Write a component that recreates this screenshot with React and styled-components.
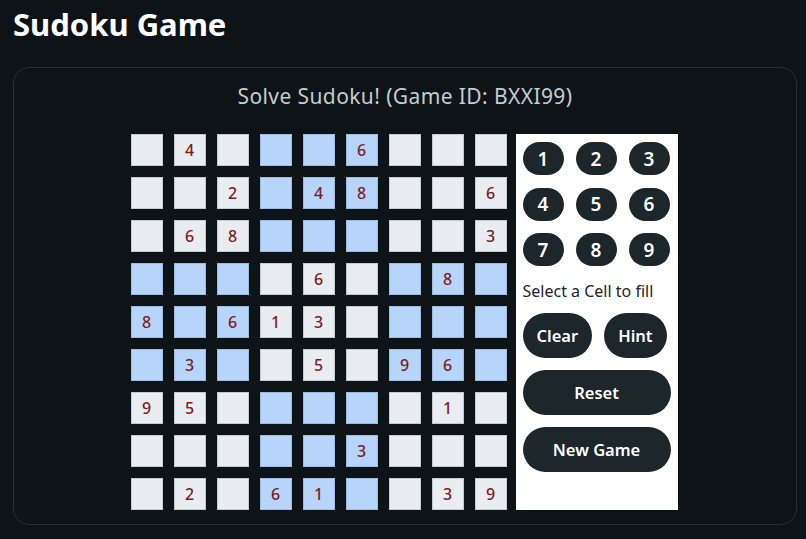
import React from 'react';
import styled, { createGlobalStyle } from 'styled-components';

const GlobalStyle = createGlobalStyle`
  body {
    margin: 0;
    background: #0d1317;
    font-family: 'Noto Sans', 'Open Sans', sans-serif;
  }
`;

const Title = styled.h1`
  margin: 0;
  padding: 0 13px;
  font-size: 31px;
  line-height: 48px;
  font-weight: 700;
  color: #ffffff;
`;

const Card = styled.section`
  margin: 19px 9px 0 13px;
  border: 1px solid #283036;
  border-radius: 16px;
  padding: 13px 0 14px;
`;

const Heading = styled.h2`
  margin: 0 0 23px;
  text-align: center;
  font-size: 21px;
  letter-spacing: 0.4px;
  line-height: 30px;
  font-weight: 400;
  color: #c3ccd3;
`;

const Game = styled.div`
  display: flex;
  justify-content: center;
  gap: 9px;
  padding-right: 2px;
`;

const Board = styled.div`
  display: grid;
  grid-template-columns: repeat(9, 32px);
  grid-auto-rows: 32px;
  gap: 11px;
`;

const Cell = styled.div`
  box-sizing: border-box;
  border: 1px solid ${p => (p.$blue ? '#9fbbe0' : '#c4c9ce')};
  background: ${p => (p.$blue ? '#b7d5fb' : '#e9edf1')};
  display: flex;
  align-items: center;
  justify-content: center;
  font-size: 16px;
  font-weight: 500;
  color: #7d1c22;
`;

const Panel = styled.div`
  width: 162px;
  box-sizing: border-box;
  background: #ffffff;
  padding: 8px 7px;
  display: flex;
  flex-direction: column;
`;

const Numbers = styled.div`
  display: grid;
  grid-template-columns: repeat(3, 41px);
  column-gap: 12px;
  row-gap: 12.5px;
`;

const Button = styled.button`
  border: none;
  background: #1c262b;
  color: #ffffff;
  font-family: inherit;
  font-weight: 600;
  border-radius: 999px;
  padding: 0 14px;
  height: 45px;
  font-size: 16.5px;
  cursor: pointer;
`;

const NumButton = styled(Button)`
  padding: 0;
  width: 41px;
  height: 33px;
  font-size: 19px;
`;

const Hint = styled.p`
  margin: 13px 0 0;
  font-size: 16px;
  line-height: 24px;
  color: #212529;
`;

const Row = styled.div`
  display: flex;
  gap: 12px;
  margin-top: 10px;
`;

const WideButton = styled(Button)`
  width: 100%;
  margin-top: 12px;
`;

const puzzle = [
  '.4...6...',
  '..2.48..6',
  '.68.....3',
  '....6..8.',
  '8.613....',
  '.3..5.96.',
  '95.....1.',
  '.....3...',
  '.2.61..39',
];

export default function App() {
  return (
    <>
      <GlobalStyle />
      <Title>Sudoku Game</Title>
      <Card>
        <Heading>Solve Sudoku! (Game ID: BXXI99)</Heading>
        <Game>
          <Board>
            {puzzle.map((line, r) =>
              line.split('').map((ch, c) => (
                <Cell
                  key={`${r}-${c}`}
                  $blue={(Math.floor(r / 3) + Math.floor(c / 3)) % 2 === 1}
                >
                  {ch === '.' ? '' : ch}
                </Cell>
              ))
            )}
          </Board>
          <Panel>
            <Numbers>
              {[1, 2, 3, 4, 5, 6, 7, 8, 9].map(n => (
                <NumButton key={n}>{n}</NumButton>
              ))}
            </Numbers>
            <Hint>Select a Cell to fill</Hint>
            <Row>
              <Button>Clear</Button>
              <Button>Hint</Button>
            </Row>
            <WideButton>Reset</WideButton>
            <WideButton>New Game</WideButton>
          </Panel>
        </Game>
      </Card>
    </>
  );
}
